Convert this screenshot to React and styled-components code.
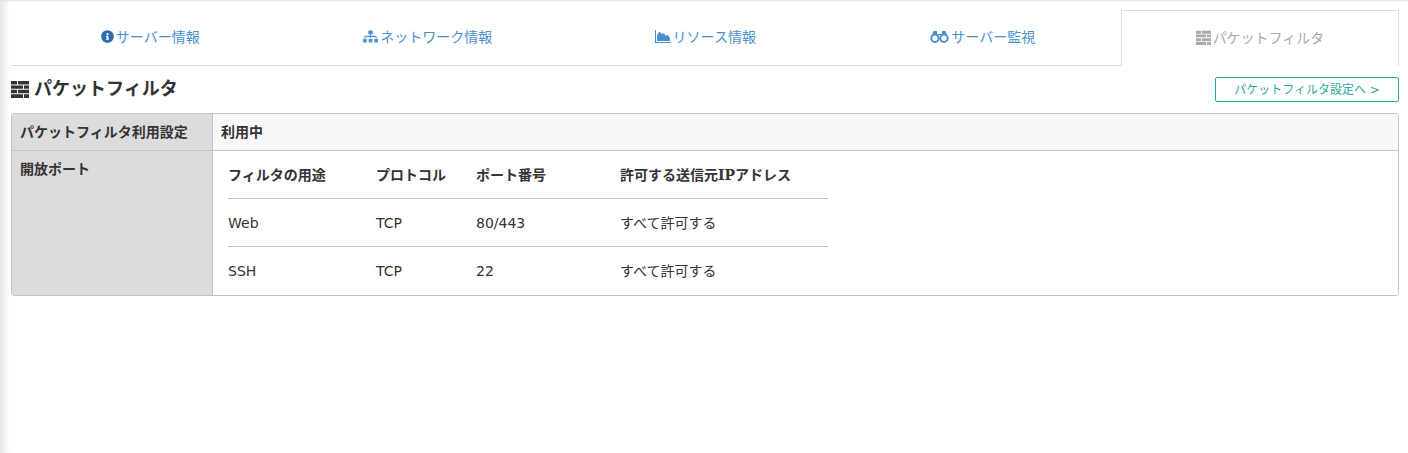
import React from 'react';
import styled, { createGlobalStyle } from 'styled-components';
import { FaInfoCircle, FaSitemap } from 'react-icons/fa';

const GlobalStyle = createGlobalStyle`
  html, body {
    margin: 0;
    padding: 0;
    height: 100%;
  }
  body {
    background: #fff;
    color: #333;
    font-family: "DejaVu Sans", "Noto Sans CJK JP", sans-serif;
    font-size: 14px;
    line-height: 20px;
  }
`;

const BrickIcon = ({ size = 18 }) => (
  <svg width={size} height={size} viewBox="0 0 18 18" fill="currentColor">
    <path d="M0 1h6v3.4H0zM7 1h11v3.4H7zM0 5.4h12v3.4H0zM13 5.4h5v3.4h-5zM0 9.8h6v3.4H0zM7 9.8h11v3.4H7zM0 14.2h12V18H0zM13 14.2h5V18h-5z" />
  </svg>
);

const AreaIcon = () => (
  <svg width="16" height="13" viewBox="0 0 16 13" fill="currentColor">
    <path d="M0 0h1v12h15v1H0z" />
    <path d="M2 11V5l2.5-3.5L7 4l1.5-1 2.5 3 1.5-1.5L15 8v3z" />
  </svg>
);

const BinocularsIcon = () => (
  <svg width="19" height="13" viewBox="0 0 19 13" fill="none" stroke="currentColor">
    <circle cx="5" cy="8.2" r="3.7" strokeWidth="2" />
    <circle cx="14" cy="8.2" r="3.7" strokeWidth="2" />
    <path d="M2 5l1.5-4h3.5v3h5V1h3.5L17 5z" fill="currentColor" strokeWidth="0" />
  </svg>
);

const tabs = [
  { label: 'サーバー情報', icon: <FaInfoCircle size={13} color="#2f6da8" /> },
  { label: 'ネットワーク情報', icon: <FaSitemap size={15} /> },
  { label: 'リソース情報', icon: <AreaIcon /> },
  { label: 'サーバー監視', icon: <BinocularsIcon /> },
  { label: 'パケットフィルタ', icon: <BrickIcon size={15} />, active: true },
];

const rows = [
  { use: 'Web', protocol: 'TCP', port: '80/443', source: 'すべて許可する' },
  { use: 'SSH', protocol: 'TCP', port: '22', source: 'すべて許可する' },
];

export default function App() {
  return (
    <Page>
      <GlobalStyle />
      <TabBar>
        {tabs.map((tab) => (
          <Tab key={tab.label} $active={tab.active}>
            {tab.icon}
            {tab.label}
          </Tab>
        ))}
      </TabBar>
      <TitleRow>
        <Title>
          <BrickIcon />
          パケットフィルタ
        </Title>
        <SettingsButton href="#">パケットフィルタ設定へ &gt;</SettingsButton>
      </TitleRow>
      <InfoTable>
        <tbody>
          <tr>
            <RowHead>パケットフィルタ利用設定</RowHead>
            <StatusCell>利用中</StatusCell>
          </tr>
          <tr>
            <RowHead>開放ポート</RowHead>
            <PortsCell>
              <PortTable>
                <thead>
                  <tr>
                    <PortHead $w={148}>フィルタの用途</PortHead>
                    <PortHead $w={100}>プロトコル</PortHead>
                    <PortHead $w={144}>ポート番号</PortHead>
                    <PortHead $w={208}>
                      許可する送信元<SerifLatin>IP</SerifLatin>アドレス
                    </PortHead>
                  </tr>
                </thead>
                <tbody>
                  {rows.map((row) => (
                    <tr key={row.use}>
                      <PortCell>{row.use}</PortCell>
                      <PortCell>{row.protocol}</PortCell>
                      <PortCell>{row.port}</PortCell>
                      <PortCell>{row.source}</PortCell>
                    </tr>
                  ))}
                </tbody>
              </PortTable>
            </PortsCell>
          </tr>
        </tbody>
      </InfoTable>
    </Page>
  );
}

const Page = styled.div`
  min-height: 453px;
  box-sizing: border-box;
  padding: 10px 9px 0 11px;
  background: linear-gradient(to right, #e6e6e6 0, #f6f6f6 6px, #fff 10px);
  box-shadow: inset 0 2px 2px -1px #e0e0e0;
`;

const TabBar = styled.div`
  display: grid;
  grid-template-columns: repeat(4, 277.5px) 278px;
  height: 56px;
`;

const Tab = styled.a`
  display: flex;
  align-items: center;
  justify-content: center;
  gap: 2px;
  box-sizing: border-box;
  padding-left: ${(p) => (p.$active ? '0' : '1px')};
  padding-bottom: 2px;
  color: ${(p) => (p.$active ? '#aaa' : '#4a8fd0')};
  background: #fff;
  border-bottom: ${(p) => (p.$active ? '0' : '1px solid #ddd')};
  border-top: ${(p) => (p.$active ? '1px solid #ddd' : '0')};
  border-left: ${(p) => (p.$active ? '1px solid #ddd' : '0')};
  border-right: ${(p) => (p.$active ? '1px solid #ddd' : '0')};
`;

const TitleRow = styled.div`
  display: flex;
  align-items: center;
  justify-content: space-between;
  height: 47px;
`;

const Title = styled.h2`
  display: flex;
  align-items: center;
  gap: 5px;
  margin: 0 0 1px;
  font-size: 18px;
  font-weight: bold;
  color: #333;
`;

const SettingsButton = styled.a`
  display: flex;
  align-items: center;
  justify-content: center;
  box-sizing: border-box;
  width: 184px;
  height: 25px;
  padding-top: 1px;
  font-size: 12px;
  color: #2aa9a0;
  text-decoration: none;
  border: 1px solid #2aa9a0;
  border-radius: 2px;
`;

const InfoTable = styled.table`
  width: 1388px;
  border-collapse: separate;
  border-spacing: 0;
  border: 1px solid #c4c4c4;
  border-radius: 3px;
  overflow: hidden;
`;

const RowHead = styled.th`
  width: 184px;
  padding: 8px 8px 8px 8px;
  vertical-align: top;
  text-align: left;
  font-weight: bold;
  color: #333;
  background: #dcdcdc;
  border-right: 1px solid #c4c4c4;
  tr:first-child > & {
    border-bottom: 1px solid #c4c4c4;
  }
`;

const StatusCell = styled.td`
  padding: 8px;
  font-weight: bold;
  background: #f8f8f8;
  border-bottom: 1px solid #c4c4c4;
`;

const PortsCell = styled.td`
  padding: 0 0 0 15px;
  background: #fff;
`;

const PortTable = styled.table`
  width: 600px;
  table-layout: fixed;
  border-collapse: collapse;
`;

const PortHead = styled.th`
  width: ${(p) => p.$w}px;
  height: 47px;
  padding: 0;
  text-align: left;
  font-weight: bold;
  border-bottom: 1px solid #c4c4c4;
`;

const SerifLatin = styled.span`
  font-family: "DejaVu Serif", "Noto Sans CJK JP", serif;
`;

const PortCell = styled.td`
  height: 47px;
  padding: 0;
  tr:not(:last-child) > & {
    border-bottom: 1px solid #c4c4c4;
  }
  tr:last-child > & {
    height: 48px;
  }
`;
